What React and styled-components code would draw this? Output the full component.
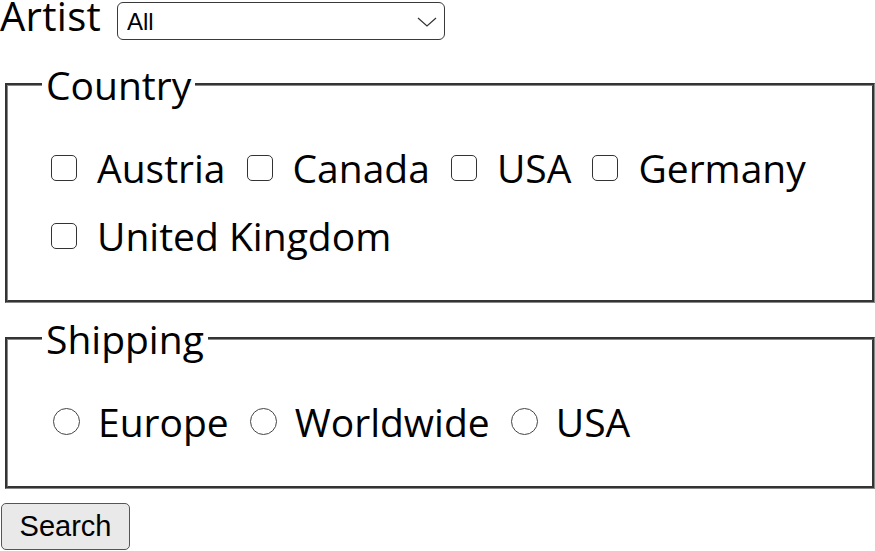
import React from 'react';
import styled, { createGlobalStyle } from 'styled-components';

const GlobalStyle = createGlobalStyle`
  body {
    margin: 0;
    background: #fff;
    color: #000;
    font-family: "Open Sans", "Noto Sans", sans-serif;
  }
`;

const Form = styled.form`
  display: flex;
  flex-direction: column;
  align-items: flex-start;
  width: 875px;
`;

const ArtistRow = styled.div`
  display: flex;
  align-items: flex-start;
`;

const ArtistLabel = styled.label`
  min-width: 105px;
  margin-right: 12px;
  font-size: 40px;
  line-height: 31px;
  letter-spacing: 0.3px;
`;

const SelectWrap = styled.div`
  position: relative;
  margin-top: 2px;
`;

const Select = styled.select`
  appearance: none;
  box-sizing: border-box;
  width: 328px;
  height: 38px;
  margin: 0;
  padding: 0 0 0 9px;
  border: 1px solid #3a3a3a;
  border-radius: 6px;
  background: #fff;
  color: #000;
  font-family: "Liberation Sans", Arial, sans-serif;
  font-size: 24px;
`;

const Chevron = styled.svg`
  position: absolute;
  top: 15px;
  right: 8px;
  pointer-events: none;
`;

const Group = styled.fieldset`
  box-sizing: border-box;
  width: 870px;
  min-width: 0;
  margin: ${p => p.$gap}px 0 0 5px;
  padding: 0 20px 38px 34px;
  border: 3px groove #888;
`;

const Legend = styled.legend`
  padding: 0 4px;
  font-size: 39px;
  line-height: 53px;
`;

const Options = styled.div`
  display: flex;
  flex-wrap: wrap;
  column-gap: ${p => (p.$round ? 19 : 21)}px;
  row-gap: 15px;
  margin-top: 30px;
  padding-left: 9px;
`;

const Option = styled.label`
  display: flex;
  align-items: center;
  gap: ${p => (p.$round ? 18 : 20)}px;
  font-size: 39px;
  line-height: 53px;
`;

const Box = styled.input`
  appearance: none;
  box-sizing: border-box;
  margin: 0;
  width: 26px;
  height: 26px;
  border: 1.5px solid #333;
  border-radius: 5px;
  background: #fff;
`;

const Radio = styled.input`
  appearance: none;
  box-sizing: border-box;
  margin: 0 0 0 2px;
  width: 27px;
  height: 27px;
  border: 1.3px solid #444;
  border-radius: 50%;
  background: #fff;
`;

const SearchButton = styled.button`
  box-sizing: border-box;
  width: 129px;
  height: 47px;
  margin: 14px 0 0 1px;
  padding: 0;
  border: 1px solid #555;
  border-radius: 5px;
  background: #e9e9e9;
  color: #000;
  font-family: "Liberation Sans", Arial, sans-serif;
  font-size: 29px;
`;

const countries = ['Austria', 'Canada', 'USA', 'Germany', 'United Kingdom'];
const regions = ['Europe', 'Worldwide', 'USA'];

export default function App() {
  return (
    <>
      <GlobalStyle />
      <Form onSubmit={e => e.preventDefault()}>
        <ArtistRow>
          <ArtistLabel htmlFor="artist">Artist</ArtistLabel>
          <SelectWrap>
            <Select id="artist" defaultValue="all">
              <option value="all">All</option>
            </Select>
            <Chevron width="20" height="10" viewBox="0 0 20 10">
              <polyline points="1,1 10,9 19,1" fill="none" stroke="#333" strokeWidth="1.2" />
            </Chevron>
          </SelectWrap>
        </ArtistRow>

        <Group $gap={18}>
          <Legend>Country</Legend>
          <Options>
            {countries.map(c => (
              <Option key={c}>
                <Box type="checkbox" name="country" value={c} />
                <span>{c}</span>
              </Option>
            ))}
          </Options>
        </Group>

        <Group $gap={9}>
          <Legend>Shipping</Legend>
          <Options $round>
            {regions.map(r => (
              <Option key={r} $round>
                <Radio type="radio" name="shipping" value={r} />
                <span>{r}</span>
              </Option>
            ))}
          </Options>
        </Group>

        <SearchButton type="submit">Search</SearchButton>
      </Form>
    </>
  );
}
